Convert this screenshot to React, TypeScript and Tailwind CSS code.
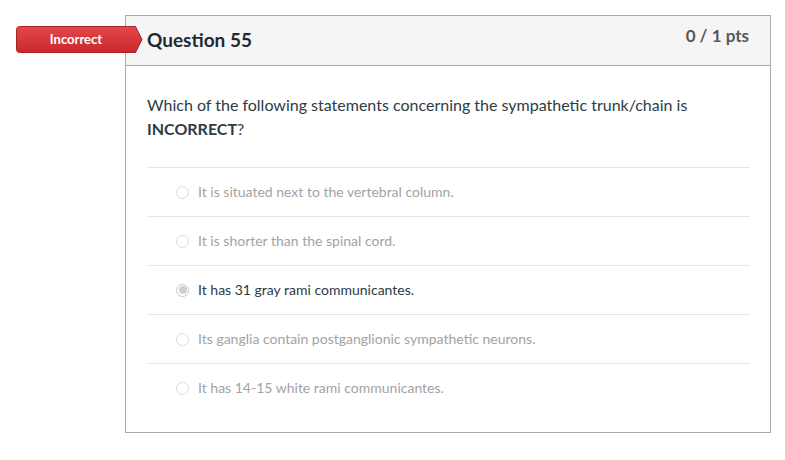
import React from "react";

const answers = [
  { text: "It is situated next to the vertebral column.", selected: false },
  { text: "It is shorter than the spinal cord.", selected: false },
  { text: "It has 31 gray rami communicantes.", selected: true },
  { text: "Its ganglia contain postganglionic sympathetic neurons.", selected: false },
  { text: "It has 14-15 white rami communicantes.", selected: false },
];

function Badge() {
  return (
    <div className="absolute left-[-110px] top-[10px] w-[127px] h-[27px]">
      <svg width="127" height="27" viewBox="0 0 127 27" className="absolute inset-0">
        <defs>
          <linearGradient id="bg" x1="0" y1="0" x2="0" y2="1">
            <stop offset="0" stopColor="#e5474a" />
            <stop offset="1" stopColor="#c8282c" />
          </linearGradient>
        </defs>
        <path
          d="M3.5 0.5 H119.5 L126 13.5 L119.5 26.5 H3.5 Q0.5 26.5 0.5 23.5 V3.5 Q0.5 0.5 3.5 0.5 Z"
          fill="url(#bg)"
          stroke="#a9242a"
          strokeWidth="1"
        />
      </svg>
      <div className="relative w-[120px] h-[27px] flex items-center justify-center text-white font-bold text-[13px] leading-none [font-family:Lato,sans-serif]">
        Incorrect
      </div>
    </div>
  );
}

function Radio({ selected }: { selected: boolean }) {
  if (selected) {
    return (
      <span className="w-[13px] h-[13px] rounded-full border border-[#c4c4c4] bg-white flex items-center justify-center shrink-0">
        <span className="w-[8px] h-[8px] rounded-full bg-[#cfcfcf]" />
      </span>
    );
  }
  return <span className="w-[13px] h-[13px] rounded-full border border-[#dcdcdc] bg-white shrink-0" />;
}

export default function App() {
  return (
    <div className="w-[785px] h-[460px] bg-white [font-family:Lato,'Liberation_Sans',sans-serif] pt-[15px] pl-[125px]">
      <div className="relative w-[646px] border border-[#a9a9a9] bg-white">
        <Badge />
        <div className="h-[50px] bg-[#f5f5f5] border-b border-[#a9a9a9] flex justify-between pl-[21px] pr-[21px]">
          <div className="pt-[12px] text-[19px] leading-[24px] font-bold text-[#1f2a33]">Question 55</div>
          <div className="pt-[8px] text-[17px] leading-[24px] font-bold text-[#585858]">0 / 1 pts</div>
        </div>
        <div className="pl-[21px] pr-[20px] pt-[27px] pb-[20px]">
          <div className="text-[16px] leading-[24px] text-[#2d3b45]">
            Which of the following statements concerning the sympathetic trunk/chain is
            <br />
            <strong className="font-bold">INCORRECT</strong>?
          </div>
          <div className="mt-[26px]">
            {answers.map((a, i) => (
              <div key={i} className="h-[49px] border-t border-[#e6e6e6] flex items-center pl-[29px] gap-[9px]">
                <Radio selected={a.selected} />
                <span className={`text-[14px] leading-[20px] ${a.selected ? "text-[#2d3b45]" : "text-[#a3a3a3]"}`}>
                  {a.text}
                </span>
              </div>
            ))}
          </div>
        </div>
      </div>
    </div>
  );
}
